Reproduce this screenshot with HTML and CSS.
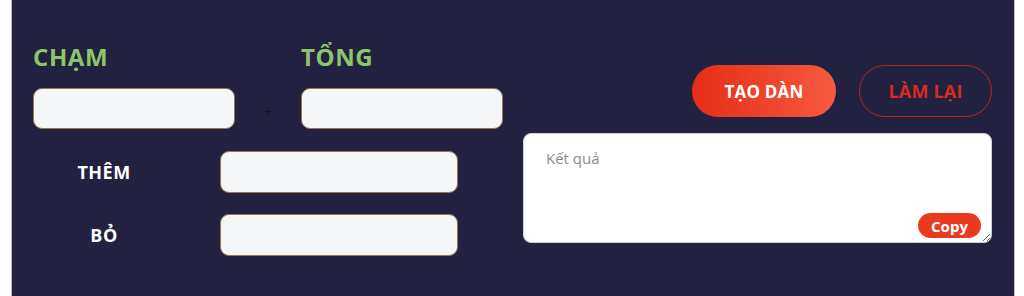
FILE: index.html
```html
<!DOCTYPE html>
<html lang="vi">
<head>
<meta charset="utf-8">
<title>Tạo dàn</title>
<link rel="stylesheet" href="styles.css">
</head>
<body>
<div class="panel">
  <div class="left">
    <div class="top-row">
      <div class="group">
        <div class="big-label">CHẠM</div>
        <input class="field" type="text">
      </div>
      <div class="plus">+</div>
      <div class="group">
        <div class="big-label">TỔNG</div>
        <input class="field" type="text">
      </div>
    </div>
    <div class="sub-grid">
      <div class="small-label">THÊM</div>
      <input class="field sub" type="text">
      <div class="small-label">BỎ</div>
      <input class="field sub" type="text">
    </div>
  </div>
  <div class="right">
    <div class="buttons">
      <button class="btn primary">TẠO DÀN</button>
      <button class="btn outline">LÀM LẠI</button>
    </div>
    <div class="result-wrap">
      <textarea class="result" placeholder="Kết quả"></textarea>
      <button class="copy">Copy</button>
    </div>
  </div>
</div>
</body>
</html>
```
FILE: styles.css
```css
html, body {
  margin: 0;
  padding: 0;
  background: #ffffff;
  height: 296px;
  overflow: hidden;
}
body {
  font-family: "Open Sans", "Noto Sans", sans-serif;
}
.panel {
  margin-left: 11px;
  width: 1004px;
  height: 296px;
  background: #22213f;
  border-left: 1px solid #b9b9c9;
  border-right: 1px solid #b9b9c9;
  display: flex;
  padding: 0 22px 0 21px;
  gap: 20px;
  box-sizing: border-box;
}
.left {
  width: 470px;
  padding-top: 42px;
  flex: none;
}
.top-row {
  display: flex;
  align-items: flex-end;
}
.group {
  width: 202px;
  display: flex;
  flex-direction: column;
}
.big-label {
  color: #8dc56b;
  font-weight: 700;
  font-size: 24px;
  line-height: 30px;
  margin-bottom: 16px;
  letter-spacing: 0.6px;
}
.plus {
  width: 66px;
  text-align: center;
  color: #15152a;
  font-size: 18px;
  line-height: 20px;
  padding-bottom: 8px;
}
.field {
  display: block;
  box-sizing: border-box;
  width: 202px;
  height: 41px;
  margin: 0;
  background: #f5f6f8;
  border: 1px solid #9a7650;
  border-radius: 9px;
  outline: none;
  padding: 0 10px;
}
.sub-grid {
  display: grid;
  grid-template-columns: 142px 238px;
  column-gap: 45px;
  row-gap: 21px;
  margin-top: 22px;
  align-items: center;
}
.field.sub {
  width: 238px;
  height: 42px;
}
.small-label {
  color: #ffffff;
  font-weight: 700;
  font-size: 18px;
  text-align: center;
  letter-spacing: 0.5px;
}
.right {
  flex: 1;
  padding-top: 65px;
}
.buttons {
  display: flex;
  justify-content: flex-end;
  gap: 23px;
}
.btn {
  height: 52px;
  border-radius: 26px;
  font-family: "Open Sans", "Noto Sans", sans-serif;
  font-weight: 700;
  font-size: 17px;
  letter-spacing: 0.2px;
  padding: 0;
  cursor: pointer;
}
.primary {
  width: 144px;
  border: none;
  color: #ffffff;
  background: linear-gradient(90deg, #e62d17 0%, #f65a40 100%);
}
.outline {
  width: 133px;
  border: 1.5px solid #b8261b;
  background: transparent;
  color: #d42c1f;
  font-size: 18px;
}
.result-wrap {
  position: relative;
  margin-top: 16px;
}
.result {
  display: block;
  box-sizing: border-box;
  width: 469px;
  height: 110px;
  margin: 0;
  border: 1px solid #d0d0d8;
  border-radius: 8px;
  background: #ffffff;
  padding: 14px 22px;
  font-family: "Open Sans", "Noto Sans", sans-serif;
  font-size: 15px;
  outline: none;
  resize: both;
}
.result::placeholder {
  color: #8a8a8a;
}
.copy {
  position: absolute;
  right: 11px;
  bottom: 5px;
  width: 63px;
  height: 25px;
  border: none;
  border-radius: 13px;
  background: #ea3a1f;
  color: #ffffff;
  font-family: "Open Sans", "Noto Sans", sans-serif;
  font-weight: 700;
  font-size: 15px;
  padding: 0;
}
```
